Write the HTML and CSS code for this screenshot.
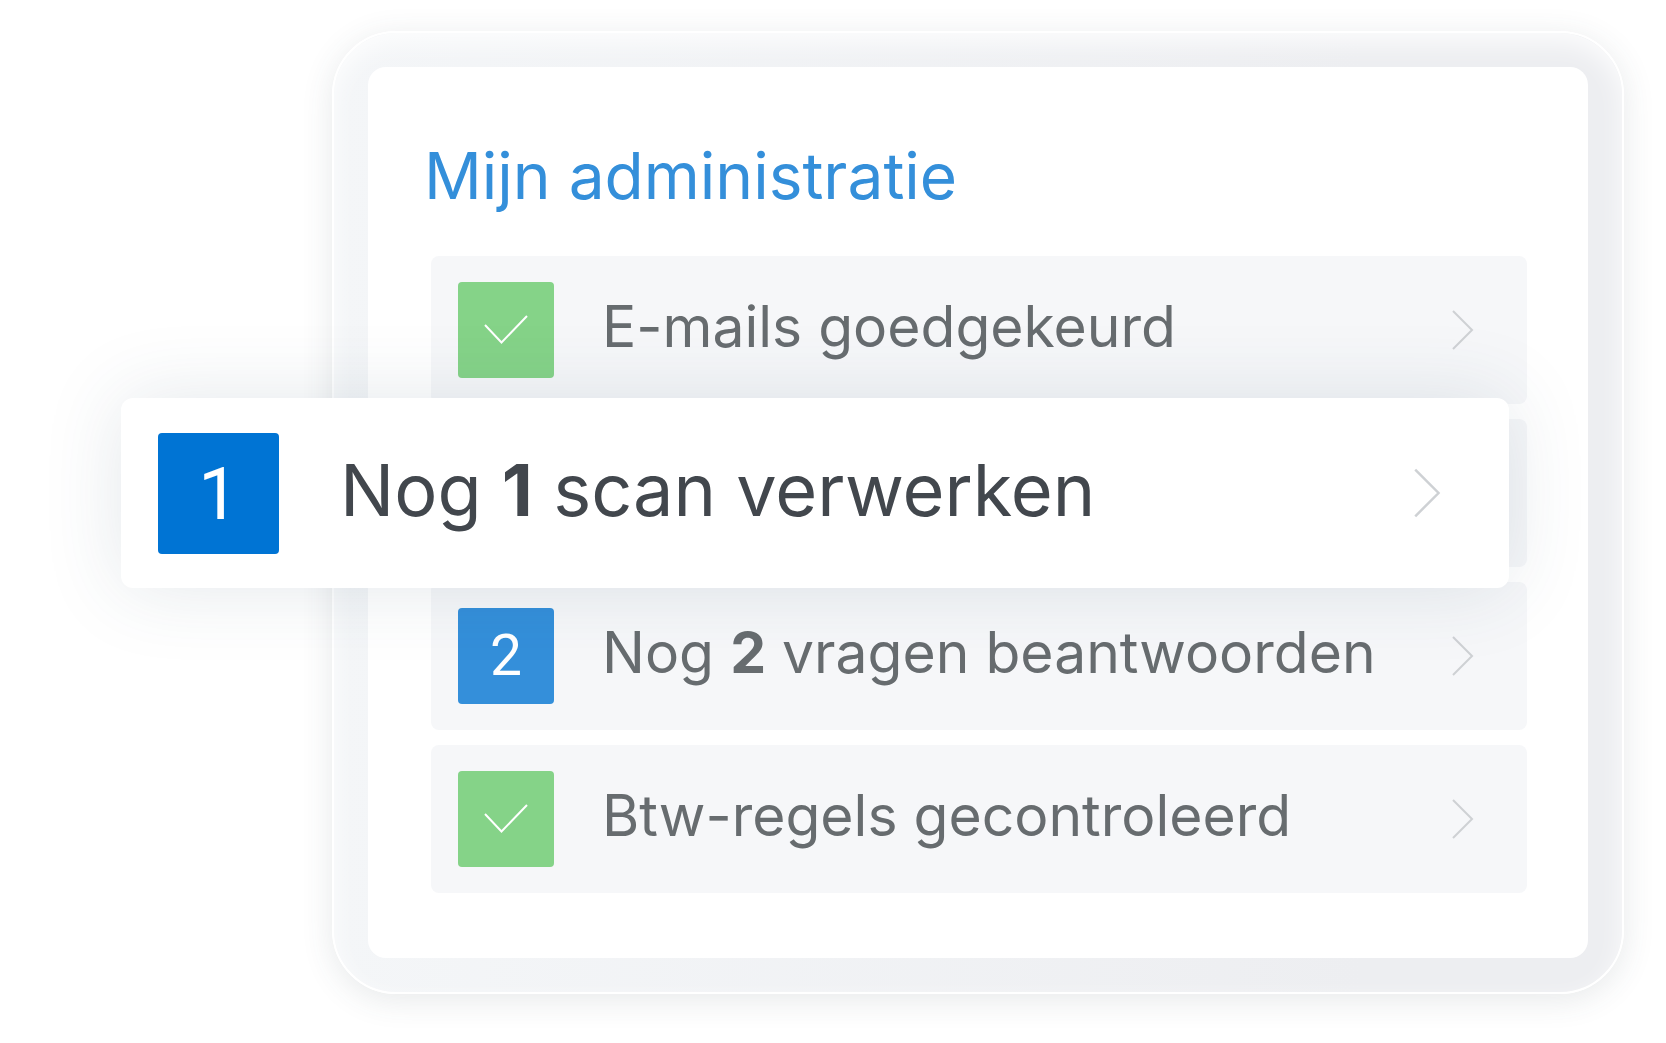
FILE: index.html
```html
<!DOCTYPE html>
<html lang="nl">
<head>
<meta charset="utf-8">
<meta name="viewport" content="width=device-width, initial-scale=1">
<title>Mijn administratie</title>
<link rel="stylesheet" href="styles.css">
</head>
<body>
<main class="frame">
  <section class="card">
    <h1 class="title">Mijn administratie</h1>
    <ul class="tasks">
      <li class="task">
        <a class="row" href="#emails">
          <span class="badge badge-done"><svg class="check" viewBox="0 0 44 30" aria-hidden="true"><path d="M1 10 17.500 27.500 43 1"/></svg></span>
          <span class="label">E-mails goedgekeurd</span>
          <svg class="chevron" viewBox="0 0 22 40" aria-hidden="true"><path d="M1 1 20 20 1 39"/></svg>
        </a>
      </li>
      <li class="task task-active">
        <a class="row row-active" href="#scans">
          <span class="badge badge-current">1</span>
          <span class="label">Nog <strong>1</strong> scan verwerken</span>
          <svg class="chevron" viewBox="0 0 22 40" aria-hidden="true"><path d="M1 1 20 20 1 39"/></svg>
        </a>
      </li>
      <li class="task">
        <a class="row" href="#vragen">
          <span class="badge badge-open">2</span>
          <span class="label">Nog <strong>2</strong> vragen beantwoorden</span>
          <svg class="chevron" viewBox="0 0 22 40" aria-hidden="true"><path d="M1 1 20 20 1 39"/></svg>
        </a>
      </li>
      <li class="task">
        <a class="row" href="#btw">
          <span class="badge badge-done"><svg class="check" viewBox="0 0 44 30" aria-hidden="true"><path d="M1 10 17.500 27.500 43 1"/></svg></span>
          <span class="label">Btw-regels gecontroleerd</span>
          <svg class="chevron" viewBox="0 0 22 40" aria-hidden="true"><path d="M1 1 20 20 1 39"/></svg>
        </a>
      </li>
    </ul>
  </section>
</main>
</body>
</html>
```
FILE: styles.css
```css
* {
  box-sizing: border-box;
}

body {
  margin: 0;
  padding: 31px 42px 50px 332px;
  background: #fff;
  font-family: Inter, "Liberation Sans", sans-serif;
}

.frame {
  padding: 34px;
  border: 2px solid #fff;
  border-radius: 64px;
  background: linear-gradient(90deg, #f4f6f8, #edeef1 80%);
  box-shadow:
    0 6px 32px rgba(60, 70, 80, 0.12),
    inset 0 10px 24px rgba(255, 255, 255, 0.8);
}

.card {
  padding: 69px 61px 65px 63px;
  border-radius: 18px;
  background: #fff;
}

.title {
  margin: 0 0 40px -7px;
  color: #348fda;
  font-size: 64px;
  font-weight: 400;
  line-height: 80px;
}

.tasks {
  display: grid;
  gap: 15px;
  margin: 0;
  padding: 0;
  list-style: none;
}

.task {
  position: relative;
  min-height: 148px;
  border-radius: 8px;
  background: #f6f7f9;
}

.task-active {
  z-index: 1;
}

.row {
  display: flex;
  align-items: center;
  padding: 26px 53px 26px 27px;
  color: #676c6f;
  font-size: 57px;
  line-height: 72px;
  text-decoration: none;
}

.label {
  flex: 1;
  margin-left: 48px;
  padding-bottom: 6px;
  white-space: nowrap;
}

.label strong {
  font-weight: 700;
}

.badge {
  display: grid;
  place-items: center;
  flex: none;
  width: 96px;
  height: 96px;
  border-radius: 4px;
  color: #fff;
  font-family: Roboto, "Liberation Sans", sans-serif;
}

.badge-done {
  background: #85d388;
}

.badge-open {
  background: #348fda;
}

.check {
  width: 44px;
  height: 30px;
  fill: none;
  stroke: #fff;
  stroke-width: 2;
}

.chevron {
  width: 22px;
  height: 40px;
  fill: none;
  stroke: #ced1d4;
  stroke-width: 2;
}

.row-active {
  position: absolute;
  inset: -21px 18px -21px -310px;
  padding: 0 68px 0 37px;
  border-radius: 12px;
  background: #fff;
  box-shadow: 0 0 80px rgba(50, 75, 100, 0.13);
  color: #42474d;
  font-size: 72px;
  line-height: 88px;
}

.row-active .badge {
  width: 121px;
  height: 121px;
  padding-top: 4px;
  background: #0074d4;
}

.row-active .label {
  margin-left: 61px;
}

.row-active .chevron {
  width: 27px;
  height: 50px;
}
```
